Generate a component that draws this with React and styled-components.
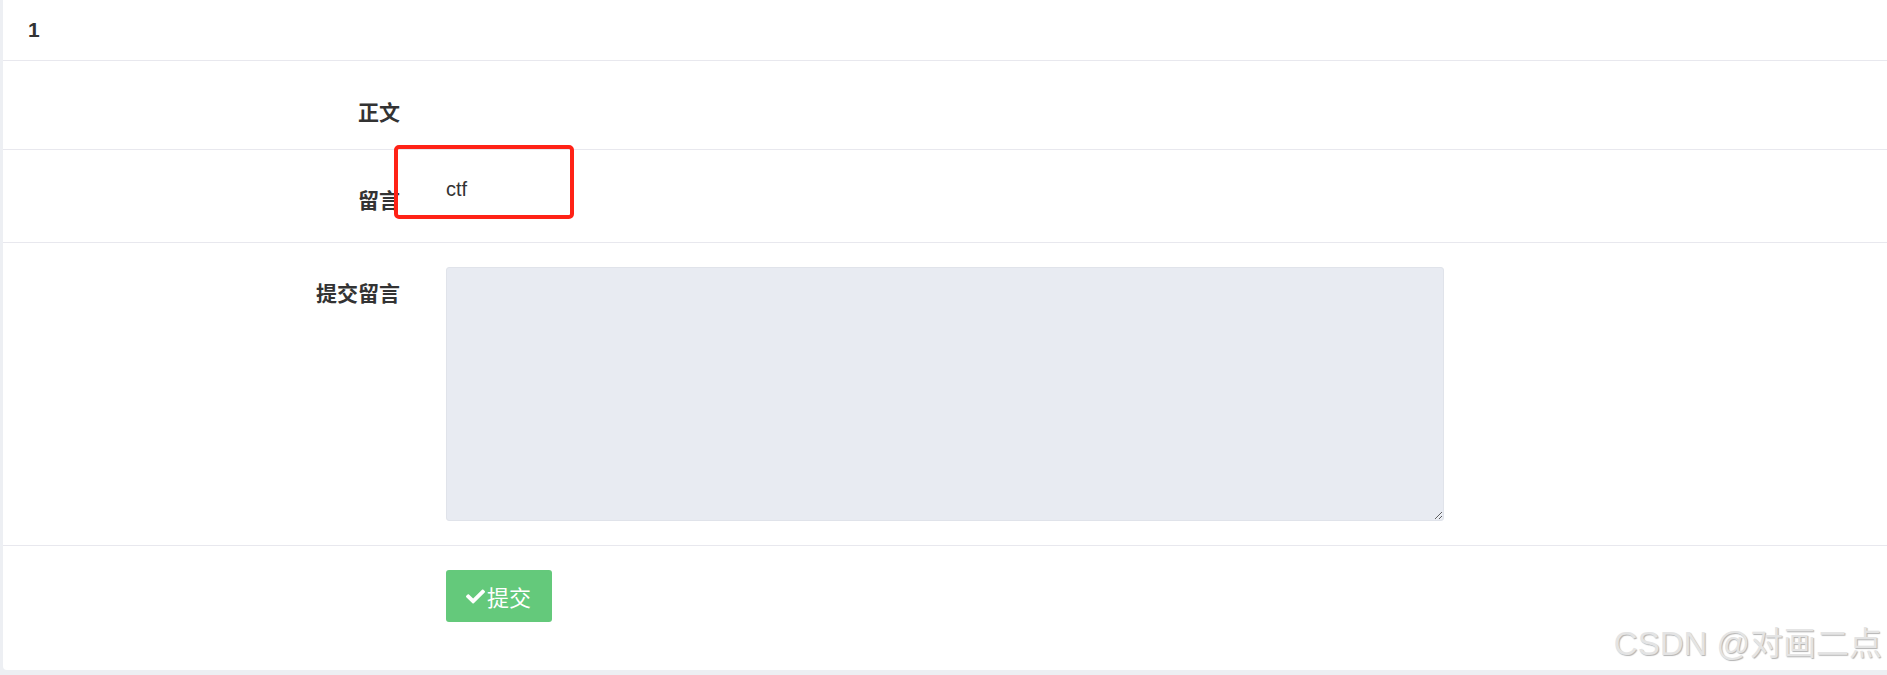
import React from "react";
import styled, { createGlobalStyle } from "styled-components";
import { FaCheck } from "react-icons/fa";

const Global = createGlobalStyle`
  html, body { margin: 0; padding: 0; }
  body {
    background: #edeff3;
    font-family: "Liberation Sans", "Noto Sans CJK SC", sans-serif;
    color: #333;
  }
  * { box-sizing: border-box; }
`;

const Page = styled.div`
  display: flex;
  height: 675px;
  padding: 0 0 5px 3px;
`;

const Panel = styled.div`
  position: relative;
  flex: 1;
  background: #fff;
  border-radius: 0 0 0 4px;
  display: flex;
  flex-direction: column;
`;

const TitleRow = styled.div`
  height: 61px;
  padding-left: 25px;
  border-bottom: 1px solid #e8e8ee;
  font-size: 21px;
  font-weight: bold;
  line-height: 60px;
  color: #333;
`;

const Row = styled.div`
  display: grid;
  grid-template-columns: 397px 998px;
  column-gap: 46px;
  align-items: start;
  height: ${(p) => p.$h}px;
  padding-top: 24px;
  border-bottom: ${(p) => (p.$last ? "none" : "1px solid #e8e8ee")};
  flex: ${(p) => (p.$last ? "1" : "none")};
`;

const Label = styled.div`
  text-align: right;
  padding-top: ${(p) => p.$pt ?? 10}px;
  font-family: "Noto Sans CJK SC", "Liberation Sans", sans-serif;
  font-size: 21px;
  font-weight: bold;
  line-height: 30px;
  color: #333;
`;

const Value = styled.div`
  font-family: "Liberation Sans", "Noto Sans CJK SC", sans-serif;
  font-size: 20px;
  line-height: 30px;
  color: #333;
`;

const TextArea = styled.textarea`
  display: block;
  width: 998px;
  height: 254px;
  background: #e8ebf2;
  border: 1px solid #e0e3ea;
  border-radius: 3px;
  outline: none;
  padding: 8px 12px;
  font-family: "Liberation Sans", sans-serif;
  font-size: 20px;
`;

const SubmitButton = styled.button`
  display: inline-flex;
  align-items: center;
  gap: 2px;
  height: 52px;
  width: 106px;
  padding: 0 0 0 20px;
  border: none;
  border-radius: 3px;
  background: #64c97b;
  color: #fff;
  font-family: "Noto Sans CJK SC", sans-serif;
  font-size: 22px;
  cursor: pointer;
  svg { width: 19px; height: 19px; margin-top: 1px; }
`;

const Highlight = styled.div`
  position: absolute;
  left: 391px;
  top: 145px;
  width: 180px;
  height: 74px;
  border: 4px solid #ff2216;
  border-radius: 5px;
  pointer-events: none;
`;

const Watermark = styled.div`
  position: absolute;
  right: 5px;
  bottom: 5px;
  font-family: "Liberation Sans", "Noto Sans CJK SC", sans-serif;
  font-size: 33px;
  color: #e4e4e4;
  text-shadow: 1px 1px 1px rgba(0, 0, 0, 0.3);
  white-space: nowrap;
  pointer-events: none;
`;

export default function App() {
  return (
    <>
      <Global />
      <Page>
        <Panel>
          <TitleRow>1</TitleRow>
          <Row $h={89}>
            <Label $pt={11}>正文</Label>
            <Value />
          </Row>
          <Row $h={93}>
            <Label>留言</Label>
            <Value>ctf</Value>
          </Row>
          <Row $h={303}>
            <Label>提交留言</Label>
            <TextArea />
          </Row>
          <Row $last>
            <div />
            <div>
              <SubmitButton>
                <FaCheck />
                提交
              </SubmitButton>
            </div>
          </Row>
          <Highlight />
          <Watermark>CSDN @对画二点</Watermark>
        </Panel>
      </Page>
    </>
  );
}
